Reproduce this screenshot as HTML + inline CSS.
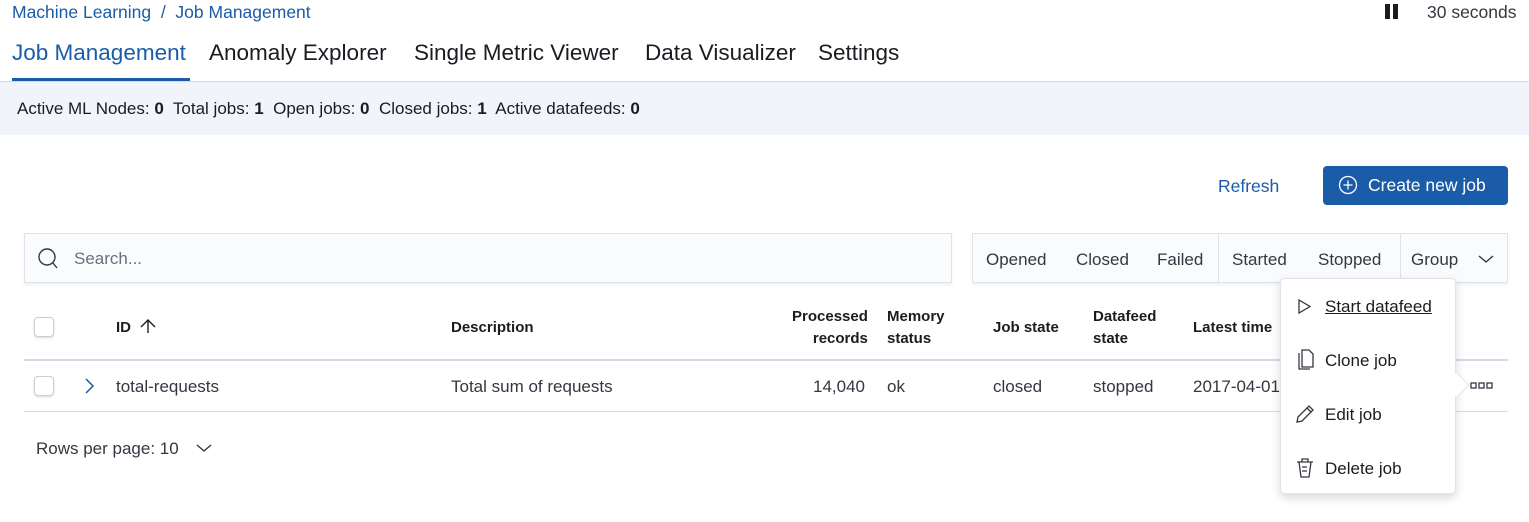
<!DOCTYPE html>
<html><head><meta charset="utf-8"><style>
*{box-sizing:border-box;margin:0;padding:0}
body{width:1529px;height:522px;overflow:hidden;background:#fff;font-family:"Liberation Sans",sans-serif;color:#343741;position:relative}
.a{position:absolute;white-space:nowrap}
.blue{color:#1a5ca8}
.t{font-size:17px}
.h{font-size:15px;font-weight:bold;color:#1a1c21;line-height:22px}
.cb{position:absolute;width:20px;height:20px;border:1px solid #c9cfd8;border-radius:4px;background:#fff;box-shadow:0 1px 2px rgba(0,0,0,.15)}
</style></head><body>
<div class="a blue" style="left:12px;top:2px;font-size:17.5px">Machine Learning &nbsp;/&nbsp; Job Management</div>
<div class="a" style="left:1385px;top:4px;width:5px;height:15px;background:#1a1c21"></div>
<div class="a" style="left:1393px;top:4px;width:5px;height:15px;background:#1a1c21"></div>
<div class="a t" style="left:1427px;top:2px;font-size:17.5px">30 seconds</div>

<div class="a" style="left:12px;top:40px;font-size:22.5px;color:#1a5ca8">Job Management</div>
<div class="a" style="left:209px;top:40px;font-size:22.5px;color:#1a1c21">Anomaly Explorer</div>
<div class="a" style="left:414px;top:40px;font-size:22.5px;color:#1a1c21">Single Metric Viewer</div>
<div class="a" style="left:645px;top:40px;font-size:22.5px;color:#1a1c21">Data Visualizer</div>
<div class="a" style="left:818px;top:40px;font-size:22.5px;color:#1a1c21">Settings</div>
<div class="a" style="left:12px;top:78px;width:178px;height:3px;background:#1a5ca8"></div>
<div class="a" style="left:0;top:81px;width:1529px;height:54px;background:#f1f4fa;border-top:1px solid #d3dae6"></div>
<div class="a t" style="left:17px;top:99px;color:#1a1c21">Active ML Nodes: <b>0</b>&nbsp; Total jobs: <b>1</b>&nbsp; Open jobs: <b>0</b>&nbsp; Closed jobs: <b>1</b>&nbsp; Active datafeeds: <b>0</b></div>

<div class="a blue" style="left:1218px;top:176px;font-size:17.5px">Refresh</div>
<div class="a" style="left:1323px;top:166px;width:185px;height:39px;background:#1a5ca8;border-radius:4px;color:#fff;font-size:17.5px;padding:9px 0 0 45px">Create new job</div>
<svg class="a" style="left:1338px;top:175px" width="20" height="20"><circle cx="10" cy="10" r="8.5" fill="none" stroke="#fff" stroke-width="1.3"/><path d="M10 5.5v9M5.5 10h9" stroke="#fff" stroke-width="1.3"/></svg>

<div class="a" style="left:24px;top:233px;width:928px;height:50px;background:#fafbfd;border:1px solid #e0e4ea;box-shadow:0 2px 2px rgba(0,0,0,.06)"></div>
<svg class="a" style="left:37px;top:247px" width="24" height="24"><circle cx="10" cy="10" r="8" fill="none" stroke="#343741" stroke-width="1.4"/><path d="M16 16l4 5" stroke="#343741" stroke-width="1.4"/></svg>
<div class="a t" style="left:74px;top:249px;color:#69707d">Search...</div>

<div class="a" style="left:972px;top:233px;width:536px;height:50px;background:#fafbfd;border:1px solid #e0e4ea;box-shadow:0 2px 2px rgba(0,0,0,.06)"></div>
<div class="a" style="left:1218px;top:234px;width:1px;height:48px;background:#e0e4ea"></div>
<div class="a" style="left:1400px;top:234px;width:1px;height:48px;background:#e0e4ea"></div>
<div class="a t" style="left:986px;top:250px">Opened</div>
<div class="a t" style="left:1076px;top:250px">Closed</div>
<div class="a t" style="left:1157px;top:250px">Failed</div>
<div class="a t" style="left:1232px;top:250px">Started</div>
<div class="a t" style="left:1318px;top:250px">Stopped</div>
<div class="a t" style="left:1411px;top:250px">Group</div>
<svg class="a" style="left:1478px;top:253px" width="16" height="12"><path d="M1 3l7 6 7-6" fill="none" stroke="#343741" stroke-width="1.4"/></svg>

<div class="cb" style="left:34px;top:317px"></div>
<div class="a h" style="left:116px;top:317px">ID</div>
<svg class="a" style="left:139px;top:318px" width="18" height="16"><path d="M9 15V2M2 9l7-7 7 7" fill="none" stroke="#1a1c21" stroke-width="1.4"/></svg>
<div class="a h" style="left:451px;top:317px">Description</div>
<div class="a h" style="left:792px;top:306px;text-align:right">Processed<br>records</div>
<div class="a h" style="left:887px;top:306px">Memory<br>status</div>
<div class="a h" style="left:993px;top:317px">Job state</div>
<div class="a h" style="left:1093px;top:306px">Datafeed<br>state</div>
<div class="a h" style="left:1193px;top:317px">Latest time</div>
<div class="a" style="left:24px;top:359px;width:1484px;height:2px;background:#d3dae6"></div>

<div class="cb" style="left:34px;top:376px"></div>
<svg class="a" style="left:84px;top:378px" width="12" height="16"><path d="M2 1l7 7-7 7" fill="none" stroke="#1a5ca8" stroke-width="1.5"/></svg>
<div class="a t" style="left:116px;top:377px">total-requests</div>
<div class="a t" style="left:451px;top:377px">Total sum of requests</div>
<div class="a t" style="left:813px;top:377px">14,040</div>
<div class="a t" style="left:887px;top:377px">ok</div>
<div class="a t" style="left:993px;top:377px">closed</div>
<div class="a t" style="left:1093px;top:377px">stopped</div>
<div class="a t" style="left:1193px;top:377px">2017-04-01</div>
<div class="a" style="left:24px;top:411px;width:1484px;height:1px;background:#d3dae6"></div>
<svg class="a" style="left:1470px;top:382px" width="24" height="8"><g fill="none" stroke="#343741" stroke-width="1.3"><rect x="1" y="1" width="5" height="5"/><rect x="9" y="1" width="5" height="5"/><rect x="17" y="1" width="5" height="5"/></g></svg>

<div class="a t" style="left:36px;top:439px">Rows per page: 10</div>
<svg class="a" style="left:196px;top:442px" width="16" height="12"><path d="M1 3l7 6 7-6" fill="none" stroke="#343741" stroke-width="1.4"/></svg>

<div class="a" style="left:1280px;top:278px;width:176px;height:216px;background:#fff;border:1px solid #e0e4ea;border-radius:5px;box-shadow:0 4px 10px rgba(0,0,0,.15)"></div>
<div class="a" style="left:1448px;top:376px;width:18px;height:18px;background:#fff;transform:rotate(45deg);border-top:1px solid #e0e4ea;border-right:1px solid #e0e4ea"></div>
<svg class="a" style="left:1297px;top:298px" width="16" height="18"><path d="M2 2v13l11-6.5z" fill="none" stroke="#343741" stroke-width="1.3"/></svg>
<div class="a t" style="left:1325px;top:297px;text-decoration:underline;color:#1a1c21">Start datafeed</div>
<svg class="a" style="left:1295px;top:349px" width="20" height="22"><path d="M4 4V20h11" fill="none" stroke="#343741" stroke-width="1.3"/><path d="M7 1h7l4 4v13H7z" fill="none" stroke="#343741" stroke-width="1.3"/></svg>
<div class="a t" style="left:1325px;top:351px;color:#1a1c21">Clone job</div>
<svg class="a" style="left:1295px;top:404px" width="20" height="20"><path d="M2 18l1-5L14 2l4 4L7 17z M12 4l4 4" fill="none" stroke="#343741" stroke-width="1.3"/></svg>
<div class="a t" style="left:1325px;top:405px;color:#1a1c21">Edit job</div>
<svg class="a" style="left:1295px;top:457px" width="20" height="22"><path d="M2 5h16M7 5V2h6v3M4 5l2 15h8l2-15M7 10h5M7 14h5" fill="none" stroke="#343741" stroke-width="1.3"/></svg>
<div class="a t" style="left:1325px;top:459px;color:#1a1c21">Delete job</div>
</body></html>
